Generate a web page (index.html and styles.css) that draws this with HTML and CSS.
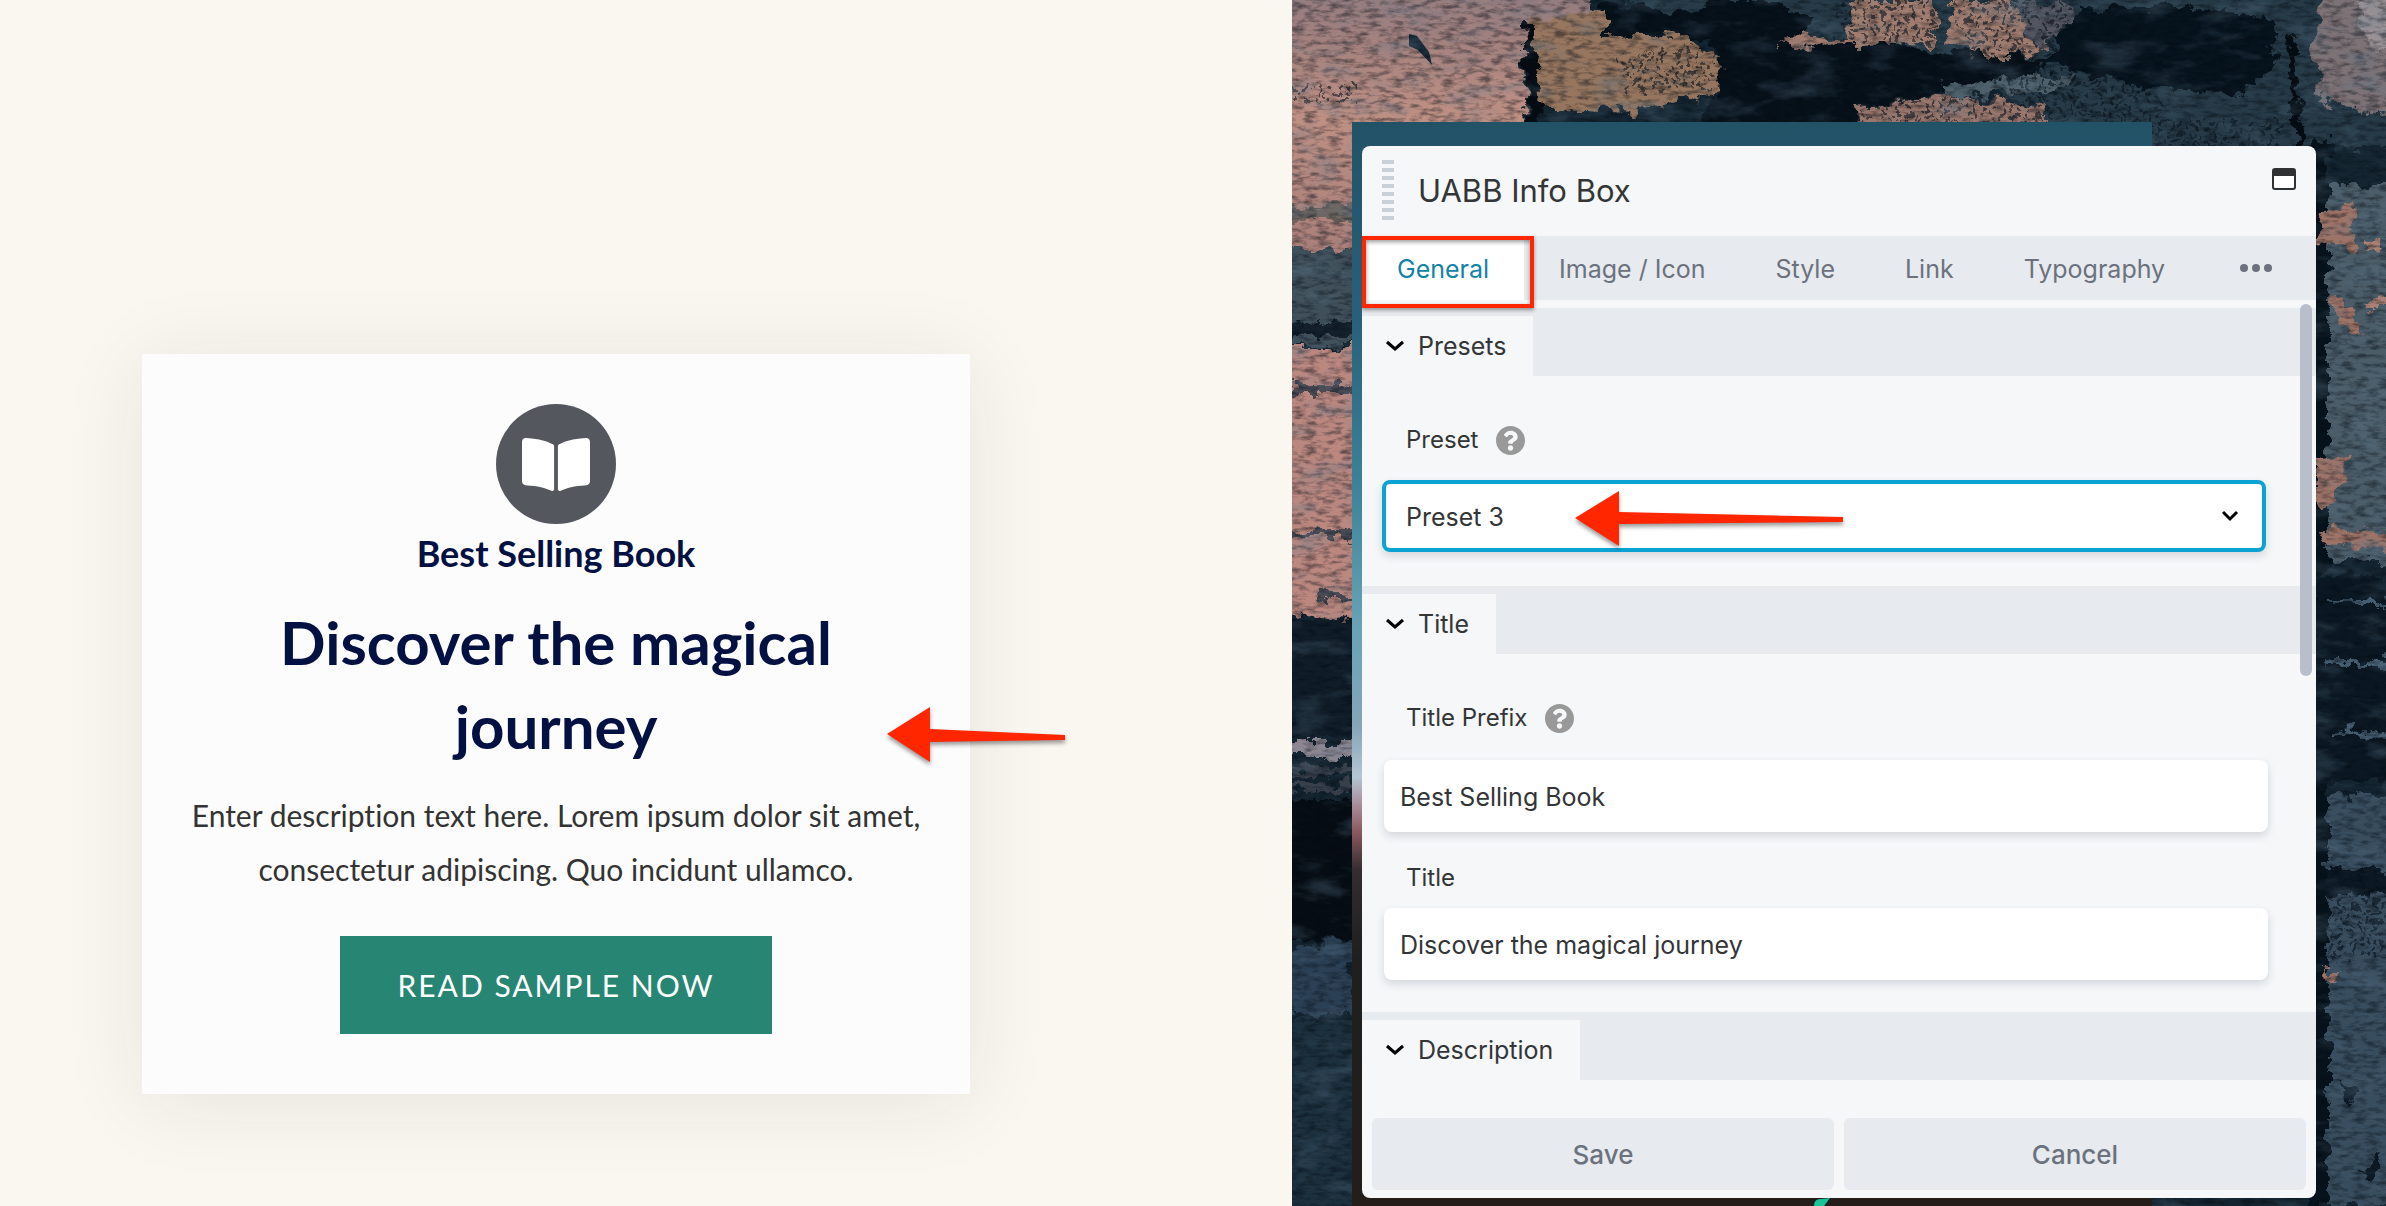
FILE: index.html
```html
<!DOCTYPE html>
<html lang="en">
<head>
<meta charset="utf-8">
<title>UABB Info Box</title>
<link rel="stylesheet" href="styles.css">
</head>
<body>
<main class="editor">
  <section class="preview">
    <article class="info-card">
      <div class="book-badge">
        <svg class="book-icon" viewBox="0 32 576 448" aria-hidden="true"><path d="M542.22 32.05c-54.8 3.11-163.72 14.43-230.96 55.59-4.64 2.84-7.27 7.89-7.27 13.17v363.87c0 11.55 12.63 18.85 23.28 13.49 69.18-34.82 169.23-44.32 218.7-46.92 16.89-.89 30.02-14.43 30.02-30.66V62.75c.01-17.71-15.35-31.74-33.77-30.7zM264.73 87.64C197.5 46.48 88.58 35.17 33.78 32.05 15.36 31.01 0 45.04 0 62.75V400.6c0 16.24 13.13 29.78 30.02 30.66 49.49 2.6 149.59 12.11 218.77 46.95 10.62 5.35 23.21-1.94 23.21-13.46V100.63c0-5.29-2.62-10.14-7.27-12.99z"/></svg>
      </div>
      <p class="card-prefix">Best Selling Book</p>
      <h1 class="card-title">Discover the magical journey</h1>
      <p class="card-text">Enter description text here. Lorem ipsum dolor sit amet, consectetur adipiscing. Quo incidunt ullamco.</p>
      <a class="card-button" href="#sample">READ SAMPLE NOW</a>
      <svg class="pointer pointer-card" viewBox="0 0 178 56" aria-hidden="true"><path d="M0 27 43 0V22L178 28V33L43 35V55Z"/></svg>
    </article>
  </section>

  <section class="stage">
    <svg class="backdrop" viewBox="0 0 1094 1206" preserveAspectRatio="xMidYMid slice" aria-hidden="true">
      <defs>
        <filter id="rough" x="-5%" y="-5%" width="110%" height="110%" color-interpolation-filters="sRGB">
          <feTurbulence type="fractalNoise" baseFrequency="0.06 0.07" numOctaves="5" seed="7"/>
          <feDisplacementMap in="SourceGraphic" scale="24" xChannelSelector="R" yChannelSelector="G"/>
        </filter>
        <filter id="canvas-grain" x="0" y="0" width="100%" height="100%" color-interpolation-filters="sRGB">
          <feTurbulence type="fractalNoise" baseFrequency="0.08 0.22" numOctaves="4" seed="3"/>
          <feColorMatrix values="0 0 0 0 0.01  0 0 0 0 0.04  0 0 0 0 0.07  2.6 0 0 0 -1.1"/>
        </filter>
        <filter id="light-grain" x="0" y="0" width="100%" height="100%" color-interpolation-filters="sRGB">
          <feTurbulence type="fractalNoise" baseFrequency="0.02 0.05" numOctaves="6" seed="21"/>
          <feColorMatrix values="0 0 0 0 0.36  0 0 0 0 0.46  0 0 0 0 0.54  0 2.8 0 0 -1.4"/>
        </filter>
        <pattern id="weave" width="12" height="14" patternUnits="userSpaceOnUse">
          <ellipse cx="3" cy="4" rx="2" ry="3" fill="#0a151f"/>
          <ellipse cx="9" cy="11" rx="2" ry="3" fill="#0a151f"/>
        </pattern>
        <linearGradient id="blush" x1="0" y1="0" x2="0" y2="1">
          <stop offset="0" stop-color="#8c7a80"/><stop offset=".25" stop-color="#a4827f"/><stop offset=".5" stop-color="#bf9084"/><stop offset="1" stop-color="#a87e79"/>
        </linearGradient>
        <linearGradient id="dusk" x1="0" y1="0" x2="0" y2="1">
          <stop offset="0" stop-color="#225266"/><stop offset=".18" stop-color="#29607a"/><stop offset=".33" stop-color="#3c8298"/><stop offset=".46" stop-color="#68a3b6"/><stop offset=".55" stop-color="#86a5b8"/><stop offset=".595" stop-color="#b4c6d3"/><stop offset=".62" stop-color="#a98f9b"/><stop offset=".645" stop-color="#8a5a60"/><stop offset=".68" stop-color="#352d30"/><stop offset=".76" stop-color="#1e1f1e"/><stop offset="1" stop-color="#241d1a"/>
        </linearGradient>
      </defs>
      <rect width="1094" height="1206" fill="#142531"/>
      <g filter="url(#rough)">
        <path fill="#263a47" d="M290-20H1110V150H800L640 60 420 40Z"/>
        <path fill="url(#blush)" d="M-30-30H290L310 30 232 60 234 140 80 260-30 262Z"/>
        <path fill="#71655f" d="M-30 205H90V222H-30Z"/>
        <path fill="#40505b" d="M-30 250H90V345H-30Z"/>
        <path fill="#14202b" d="M-30 322H90V338H-30Z"/>
        <path fill="#bb8880" d="M-30 347H90V610L60 620-30 612Z"/>
        <path fill="#4b4c56" d="M-30 386H90V396H-30ZM-30 530H90V537H-30ZM20 594H90V600H20Z"/>
        <path fill="#101d29" d="M-30 620H90V735H-30Z"/>
        <path fill="#8d8792" d="M-30 741H90V757H-30Z"/>
        <path fill="#37404b" d="M-30 767H90V775H-30ZM-30 783H90V791H-30Z"/>
        <path fill="#060d14" d="M-30 800H90V940H-30Z"/>
        <path fill="#2b4054" d="M-30 950 60 940V1015H-30Z"/>
        <path fill="#1c303e" d="M-30 1020H90V1230H-30Z"/>
        <path fill="#97765f" d="M236 22 310 8 326 36 398 38 432 62 430 92 340 112 240 108Z"/>
        <path fill="#07111a" d="M312 4 400 12 415 0H470L520 20 510 36 484 46 600 44 700 56 760 60 740 76 650 92 568 108 566 130H400L420 96 432 66 415 38 312 36Z"/>
        <path fill="#a17d6f" d="M484 46 510 32 555 40 560 0H646L640 44ZM656 42 660 0H720L760 40 735 56 690 58Z"/>
        <path fill="#535660" d="M715 0H775L790 30 745 46Z"/>
        <path fill="#99776d" d="M566 110 640 96 750 104 752 126 568 130Z"/>
        <path fill="#4e606b" d="M650 84 780 74 770 92 650 98Z"/>
        <path fill="#07131d" d="M790 8H920L980 20 985 60 950 96 860 88 750 64Z"/>
        <path fill="#050c12" d="M232 20H240L250 130H236ZM994 40H1002L1012 150H1004Z"/>
        <path fill="#7d7275" d="M1030-10H1120V118L1070 112 1030 100 1020 40Z"/>
        <path fill="#9b9296" d="M1068 0H1110V52L1082 52 1068 22Z"/>
        <path fill="#4b5d69" d="M1020 185H1110V560H1020Z"/>
        <path fill="#07131c" d="M1018 140H1036V1206H1018Z"/>
        <path fill="#0b1823" d="M1020 575H1110V780H1020Z"/>
        <path fill="#384d5e" d="M1036 795H1110V1206H1036Z"/>
        <path fill="#0d1a25" d="M1036 868H1110V892H1036ZM1046 1080 1066 1090 1058 1106ZM1064 1170 1086 1154V1178Z"/>
        <path fill="#9f7468" d="M1030 208 1064 206 1060 250 1026 242ZM1036 300 1052 298 1072 336 1050 326ZM1022 460 1058 458 1046 494 1028 508ZM1026 530 1110 532V552L1030 542ZM1028 970 1048 970 1040 978Z"/>
        <path fill="#a98175" d="M1072 240H1090V252H1074ZM1070 298H1110V310H1074Z"/>
        <path fill="#455d70" d="M1036 600H1110V604H1036ZM1036 660H1110V665H1036ZM1036 730 1110 734V739L1036 735Z"/>
      </g>
      <path fill="#192b39" d="M117 34 125 36 137 52 140 65 126 50 117 46Z"/>
      <g fill="url(#weave)" opacity=".6" filter="url(#rough)">
        <path d="M0 84H64V102H0ZM320 58 410 44 430 90 340 92ZM552 0H640V42H540ZM660 0H780L770 56H680ZM570 100H780V122H570ZM690 76 860 56 870 122H780ZM1034 870H1094V960H1034ZM860 122H990V146H860Z"/>
      </g>
      <rect width="1094" height="1206" filter="url(#canvas-grain)" opacity=".45"/>
      <rect width="1094" height="1206" filter="url(#light-grain)" opacity=".35"/>
      <rect x="60" y="122" width="800" height="1100" fill="url(#dusk)"/>
      <path fill="#19c49b" d="M522 1206Q522 1198 530 1199L538 1198 532 1206Z"/>
    </svg>

    <form class="panel">
      <header class="panel-head">
        <span class="grip"></span>
        <h2 class="panel-title">UABB Info Box</h2>
        <button class="window-button" type="button" aria-label="Toggle window">
          <svg width="24" height="22" viewBox="0 0 24 22" aria-hidden="true"><rect x="1" y="1" width="22" height="20" rx="2" fill="#fff" stroke="#2f3133" stroke-width="2"/><path d="M1 1H23V8H1Z" fill="#2f3133"/></svg>
        </button>
      </header>

      <nav class="tabs">
        <button class="tab tab-active" type="button">General<span class="tab-highlight"></span></button>
        <button class="tab" type="button">Image / Icon</button>
        <button class="tab" type="button">Style</button>
        <button class="tab" type="button">Link</button>
        <button class="tab" type="button">Typography</button>
        <button class="tab tab-more" type="button" aria-label="More tabs"><svg width="32" height="8" viewBox="0 0 32 8" aria-hidden="true"><circle cx="4" cy="4" r="4"/><circle cx="16" cy="4" r="4"/><circle cx="28" cy="4" r="4"/></svg></button>
      </nav>

      <div class="panel-body">
        <span class="scrollbar"></span>
        <section class="group">
          <div class="group-bar"><button class="group-toggle" type="button"><svg class="chevron" viewBox="0 0 18 12" aria-hidden="true"><path d="M1 2 9 9 17 2"/></svg>Presets</button></div>
          <div class="fields">
            <div class="label-row"><label for="preset">Preset</label><svg class="help" viewBox="8 8 496 496" aria-hidden="true"><path d="M504 256c0 136.997-111.043 248-248 248S8 392.997 8 256C8 119.083 119.043 8 256 8s248 111.083 248 248zM262.655 90c-54.497 0-89.255 22.957-116.549 63.758-3.536 5.286-2.353 12.415 2.715 16.258l34.699 26.31c5.205 3.947 12.621 3.008 16.665-2.122 17.864-22.658 30.113-35.797 57.303-35.797 20.429 0 45.698 13.148 45.698 32.958 0 14.976-12.363 22.667-32.534 33.976C247.128 238.528 216 254.941 216 296v4c0 6.627 5.373 12 12 12h56c6.627 0 12-5.373 12-12v-1.333c0-28.462 83.186-29.647 83.186-106.667 0-58.002-60.165-102-116.531-102zM256 338c-25.365 0-46 20.635-46 46 0 25.364 20.635 46 46 46s46-20.636 46-46c0-25.364-20.635-46-46-46z"/></svg></div>
            <div class="select-wrap">
              <select class="select" id="preset"><option>Preset 3</option></select>
              <svg class="chevron select-chevron" viewBox="0 0 18 12" aria-hidden="true"><path d="M2 2 9 9 16 2"/></svg>
              <svg class="pointer pointer-select" viewBox="0 0 268 56" aria-hidden="true"><path d="M0 27 44 0V21L268 26V31L44 33V55Z"/></svg>
            </div>
          </div>
        </section>

        <section class="group">
          <div class="group-bar"><button class="group-toggle" type="button"><svg class="chevron" viewBox="0 0 18 12" aria-hidden="true"><path d="M1 2 9 9 17 2"/></svg>Title</button></div>
          <div class="fields">
            <div class="label-row"><label for="prefix">Title Prefix</label><svg class="help" viewBox="8 8 496 496" aria-hidden="true"><path d="M504 256c0 136.997-111.043 248-248 248S8 392.997 8 256C8 119.083 119.043 8 256 8s248 111.083 248 248zM262.655 90c-54.497 0-89.255 22.957-116.549 63.758-3.536 5.286-2.353 12.415 2.715 16.258l34.699 26.31c5.205 3.947 12.621 3.008 16.665-2.122 17.864-22.658 30.113-35.797 57.303-35.797 20.429 0 45.698 13.148 45.698 32.958 0 14.976-12.363 22.667-32.534 33.976C247.128 238.528 216 254.941 216 296v4c0 6.627 5.373 12 12 12h56c6.627 0 12-5.373 12-12v-1.333c0-28.462 83.186-29.647 83.186-106.667 0-58.002-60.165-102-116.531-102zM256 338c-25.365 0-46 20.635-46 46 0 25.364 20.635 46 46 46s46-20.636 46-46c0-25.364-20.635-46-46-46z"/></svg></div>
            <input class="input" id="prefix" type="text" value="Best Selling Book">
            <div class="label-row label-row-next"><label for="title">Title</label></div>
            <input class="input" id="title" type="text" value="Discover the magical journey">
          </div>
        </section>

        <section class="group">
          <div class="group-bar"><button class="group-toggle" type="button"><svg class="chevron" viewBox="0 0 18 12" aria-hidden="true"><path d="M1 2 9 9 17 2"/></svg>Description</button></div>
        </section>
      </div>

      <footer class="panel-foot">
        <button class="action" type="button">Save</button>
        <button class="action" type="button">Cancel</button>
      </footer>
    </form>
  </section>
</main>
</body>
</html>
```
FILE: styles.css
```css
* { box-sizing: border-box; }
body { margin: 0; font-family: Inter, "Liberation Sans", sans-serif; color: #333537; }
h1, h2, p { margin: 0; }
button, input, select { font: inherit; color: inherit; border: 0; margin: 0; }

.editor { display: grid; grid-template-columns: 1292fr 1094fr; min-height: 100vh; }

/* Page preview */
.preview { background: #faf7f1; padding: 354px 322px 112px 142px; font-family: Lato, sans-serif; font-variant-ligatures: none; }
.info-card {
  position: relative;
  display: flex; flex-direction: column; align-items: center;
  padding: 50px 44px 60px;
  background: #fcfcfc;
  box-shadow: 0 8px 80px rgba(30, 30, 20, .09);
  text-align: center;
}
.book-badge { display: grid; place-items: center; width: 120px; height: 120px; border-radius: 50%; background: #54575e; }
.book-icon { width: 68px; height: 53px; fill: #fff; }
.card-prefix { margin-top: 4px; font-size: 36px; line-height: 50px; font-weight: 700; color: #031042; }
.card-title { margin-top: 22px; font-size: 60px; line-height: 84px; font-weight: 700; color: #031042; }
.card-text { margin-top: 20px; font-size: 30px; line-height: 54px; color: #333; }
.card-button { margin-top: 40px; padding: 27px 57px; background: #278573; color: #fff; font-size: 30px; line-height: 44px; letter-spacing: 2px; text-decoration: none; white-space: nowrap; }

.pointer { position: absolute; fill: #ff2600; filter: drop-shadow(0 3px 2px rgba(0, 0, 0, .4)); overflow: visible; }
.pointer-card { width: 178px; height: 56px; right: -95px; top: 353px; }
.pointer-select { width: 268px; height: 56px; left: 193px; top: 11px; pointer-events: none; }

/* Settings window over the page */
.stage { position: relative; padding: 146px 70px 8px; background: #142531; overflow: hidden; }
.backdrop { position: absolute; inset: 0; width: 100%; height: 100%; }
.panel { position: relative; display: flex; flex-direction: column; background: #f5f7f9; border-radius: 8px; overflow: hidden; }
.panel-head { display: flex; align-items: flex-start; padding: 14px 20px 14px; }
.grip { width: 12px; height: 60px; background: repeating-linear-gradient(#c8d0d8 0 4px, transparent 4px 8px); }
.panel-title { flex: 1; margin-left: 24px; font-size: 31px; line-height: 62px; font-weight: 400; }
.window-button { display: flex; margin-top: 8px; padding: 0; background: none; }

.tabs { display: flex; background: #e7eaef; margin-bottom: 8px; position: relative; z-index: 1; }
.tab { position: relative; padding: 2px 35px 0; height: 64px; background: none; font-size: 25px; line-height: 62px; color: #6b727e; white-space: nowrap; }
.tab-active { background: #fff; color: #1482a8; }
.tab-highlight { position: absolute; inset: 0 -10px -8px 0; border: 4px solid #ff2600; box-shadow: 0 2px 4px rgba(0, 0, 0, .4), inset 0 2px 4px rgba(0, 0, 0, .4); }
.tab-more { margin-left: auto; padding: 0 44px 0 0; }
.tab-more svg { display: block; fill: #6b727e; }

.panel-body { position: relative; }
.scrollbar { position: absolute; right: 4px; top: -4px; width: 12px; height: 372px; border-radius: 6px; background: #b8bfca; }
.group-bar { padding-top: 8px; background: #e7eaef; }
.group-toggle { display: flex; align-items: center; gap: 14px; height: 60px; padding: 0 27px 0 24px; background: #f5f7f9; font-size: 25px; }
.chevron { width: 18px; height: 12px; fill: none; stroke: #000; stroke-width: 3; }
.fields { padding: 48px 48px 32px 22px; }
.label-row { display: flex; align-items: center; gap: 18px; height: 32px; margin: 0 0 26px 22px; font-size: 24px; line-height: 32px; }
.label-row-next { margin-top: 30px; margin-bottom: 14px; }
.help { width: 29px; height: 29px; fill: #999; }
.select-wrap { position: relative; margin: -2px 2px 2px -2px; }
.select { display: block; appearance: none; width: 100%; height: 72px; padding: 2px 20px 0; border: 4px solid #0aa3d3; border-radius: 8px; background: #fff; font-size: 25px; box-shadow: 0 4px 8px rgba(40, 50, 70, .16); }
.select-chevron { position: absolute; right: 27px; top: 30px; pointer-events: none; }
.input { display: block; width: 100%; height: 72px; padding: 2px 16px 0; border-radius: 8px; background: #fff; font-size: 25px; box-shadow: 0 4px 8px rgba(40, 50, 70, .16); }

.panel-foot { display: flex; gap: 10px; margin-top: auto; padding: 38px 10px 8px; }
.action { flex: 1; height: 72px; border-radius: 6px; background: #e7eaef; color: #6b727e; font-size: 26px; font-weight: 500; }
```
